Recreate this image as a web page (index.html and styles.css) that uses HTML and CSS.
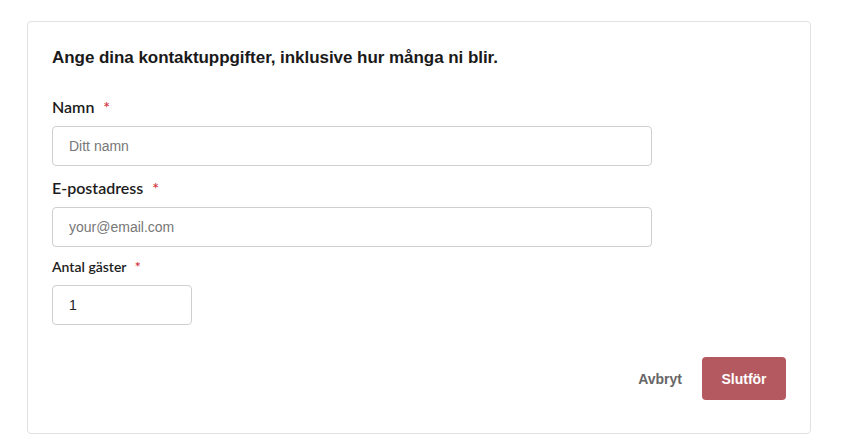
FILE: index.html
```html
<!DOCTYPE html>
<html lang="sv">
<head>
<meta charset="utf-8">
<title>Kontaktuppgifter</title>
<link rel="stylesheet" href="styles.css">
</head>
<body>
<div class="page">
  <form class="card">
    <h2 class="title">Ange dina kontaktuppgifter, inklusive hur många ni blir.</h2>
    <div class="field field-first">
      <label class="label" for="name">Namn <span class="req">*</span></label>
      <input class="input input-wide" id="name" type="text" placeholder="Ditt namn">
    </div>
    <div class="field">
      <label class="label" for="email">E-postadress <span class="req">*</span></label>
      <input class="input input-wide" id="email" type="email" placeholder="your@email.com">
    </div>
    <div class="field field-small">
      <label class="label label-small" for="guests">Antal gäster <span class="req">*</span></label>
      <input class="input input-narrow" id="guests" type="text" value="1">
    </div>
    <div class="actions">
      <button type="button" class="btn-cancel">Avbryt</button>
      <button type="button" class="btn-primary">Slutför</button>
    </div>
  </form>
</div>
</body>
</html>
```
FILE: styles.css
```css
* { box-sizing: border-box; }
html, body { margin: 0; padding: 0; background: #fff; }
.page {
  padding: 21px 0 0 27px;
}
.card {
  width: 784px;
  border: 1px solid #e2e2e2;
  border-radius: 4px;
  padding: 24px 24px 33px 24px;
  display: flex;
  flex-direction: column;
}
.title {
  margin: 0;
  font-family: "Liberation Sans", Arial, sans-serif;
  font-weight: 700;
  font-size: 17px;
  line-height: 24px;
  color: #1a1a1a;
  letter-spacing: -0.05px;
}
.field {
  display: flex;
  flex-direction: column;
  margin-top: 12px;
}
.field-first { margin-top: 27px; }
.field-small { margin-top: 10px; }
.label {
  font-family: Lato, "Noto Sans", sans-serif;
  font-weight: 600;
  font-size: 16px;
  line-height: 20px;
  color: #1c1c1c;
  margin-bottom: 9px;
}
.label-small {
  font-size: 14px;
  margin-bottom: 8px;
}
.req {
  color: #d1343d;
  margin-left: 5px;
  font-size: 1em;
}
.input {
  height: 40px;
  border: 1px solid #cfcfcf;
  border-radius: 4px;
  padding: 0 16px;
  font-family: "Liberation Sans", Arial, sans-serif;
  font-size: 14px;
  color: #222;
  background: #fff;
  outline: none;
}
.input::placeholder { color: #777; }
.input-wide { width: 600px; }
.input-narrow { width: 140px; }
.actions {
  margin-top: 32px;
  display: flex;
  justify-content: flex-end;
  align-items: center;
  gap: 20px;
}
.btn-cancel {
  border: 0;
  background: transparent;
  padding: 0;
  font-family: "Liberation Sans", Arial, sans-serif;
  font-weight: 700;
  font-size: 14px;
  color: #666;
}
.btn-primary {
  width: 84px;
  height: 43px;
  border: 0;
  border-radius: 4px;
  background: #b4595f;
  color: #fff;
  font-family: "Liberation Sans", Arial, sans-serif;
  font-weight: 700;
  font-size: 14px;
}
```
